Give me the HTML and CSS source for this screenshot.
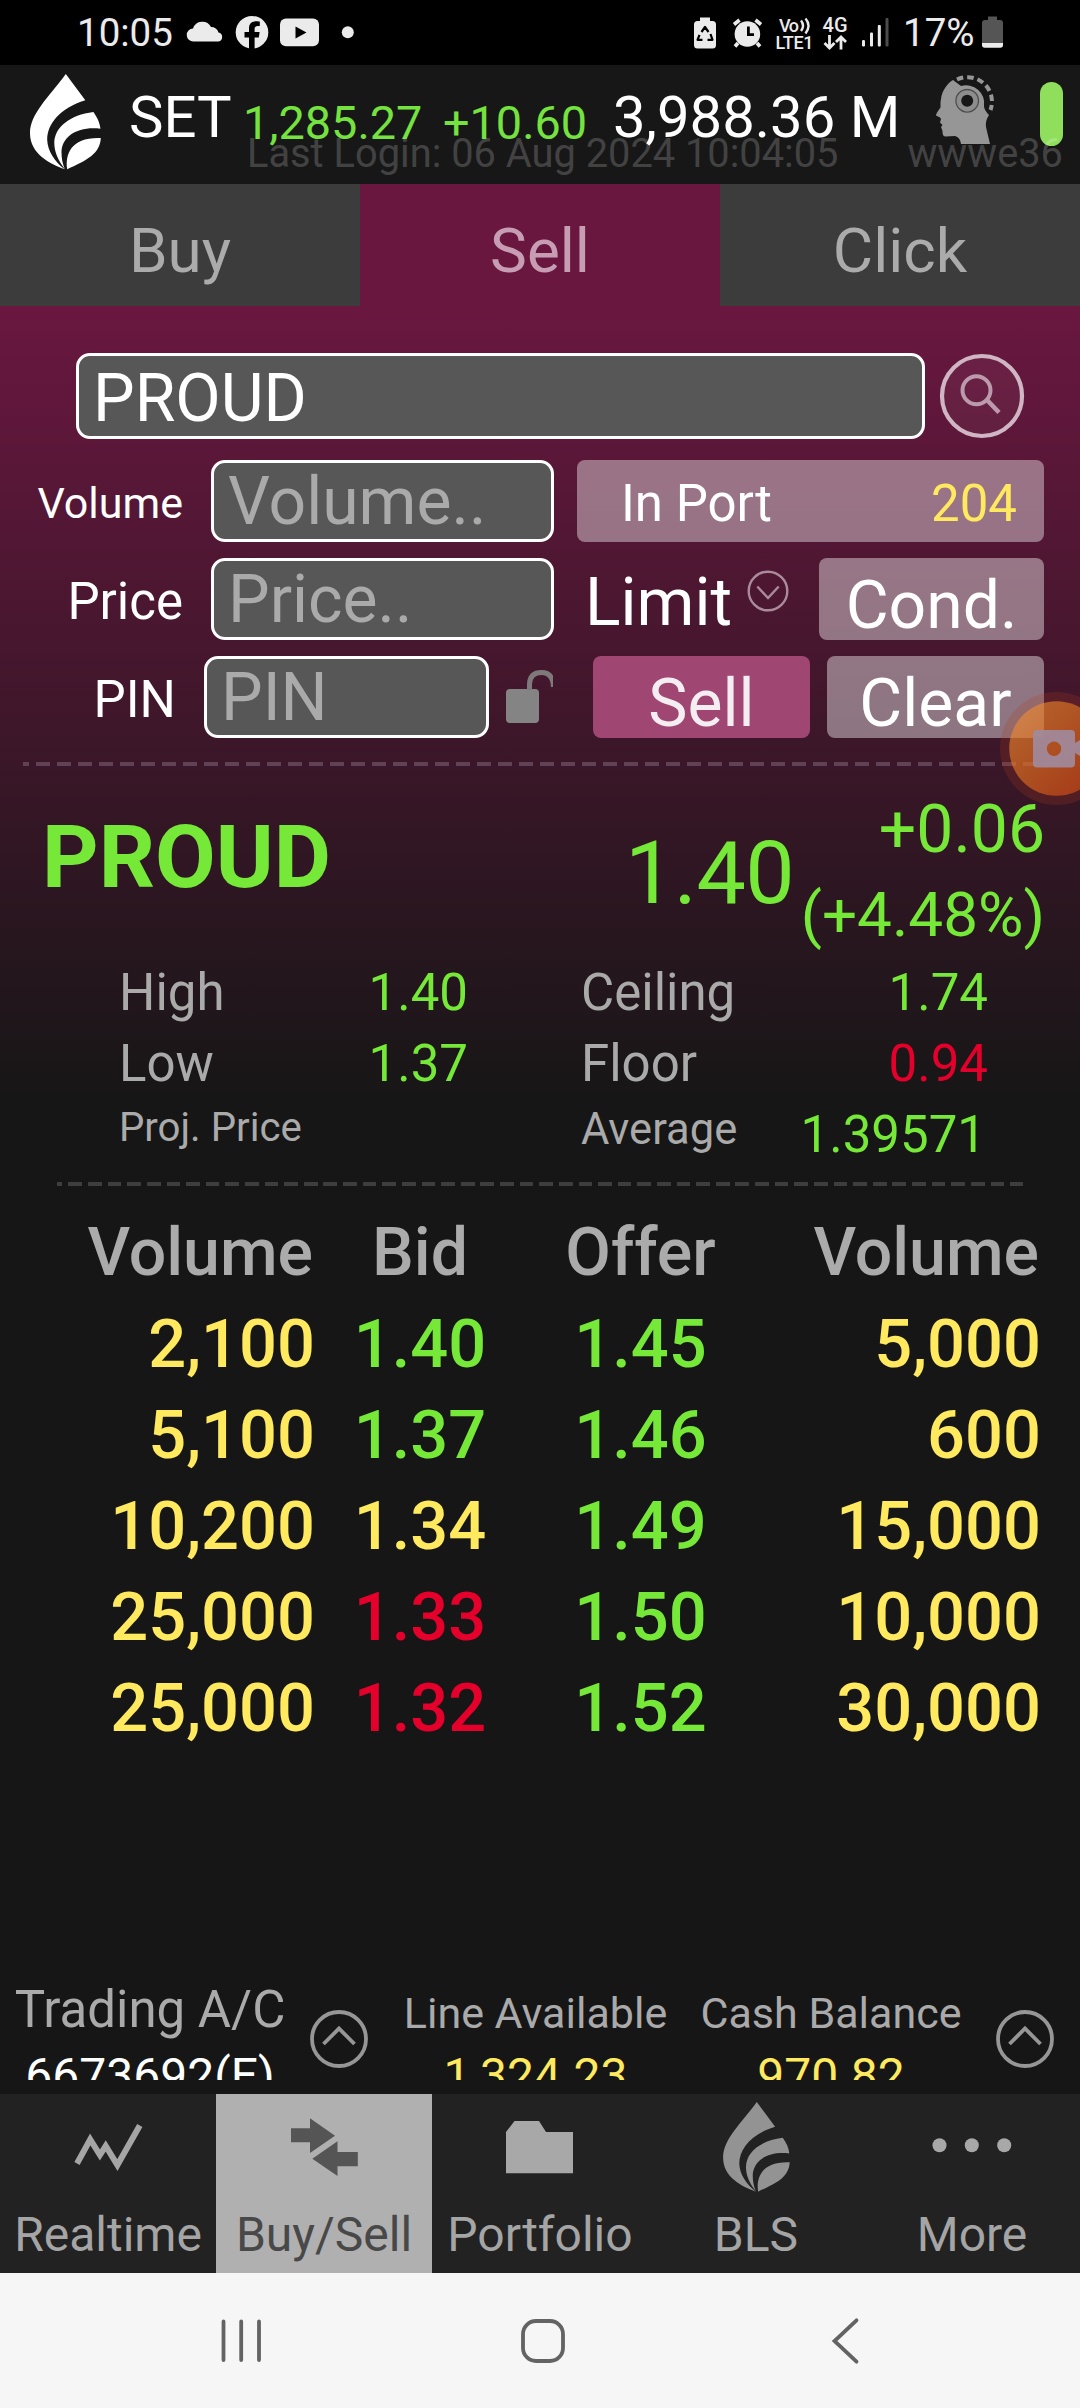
FILE: index.html
```html
<!DOCTYPE html>
<html lang="en">
<head>
<meta charset="utf-8">
<title>Buy/Sell - PROUD</title>
<link rel="stylesheet" href="styles.css">
</head>
<body>
<svg class="defs" width="0" height="0" aria-hidden="true">
  <symbol id="drop" viewBox="0 0 71 96">
    <path d="M35.8 0 L55.3 26.3 C30 34 17 50 17.2 66 C17.6 77 25 88 34.8 95.3 C20 90 0 80 0 59.3 C0 40 18 24 35.8 0Z"/>
    <path d="M63.4 38 C67 43 70 49 70.4 54.7 C48 52 32 62 31.5 78 C31.5 84 32.5 90 34.8 95 C28 86 24.3 78 24.3 69 C24.5 53 40 41 63.4 38Z"/>
    <path d="M70.8 64 C70 80 57 86 37.2 95.3 C35 80 41 63 70.8 64Z"/>
  </symbol>
</svg>
<div class="phone">
  <div class="status">
    <span class="clock">10:05</span>
    <svg class="status-left" viewBox="180 0 200 65" fill="#ebebeb">
      <path d="M193.5 41.5 a6.5 6.5 0 0 1 -.5 -13 a9.8 9.8 0 0 1 18 -1.5 a8 8 0 0 1 7.5 5.5 a4.6 4.6 0 0 1 0 9Z"/>
      <circle cx="252" cy="32.3" r="16.3"/>
      <path fill="#000" d="M249 49 V37.5 h-4.5 v-5.500 h4.500 v-3.500 c0-5 3-7.300 7.300-7.300 1.800 0 3.500.3 3.500.3 v4.400 h-2 c-2.300 0-3.200 1.400-3.200 3 v3.100 h5 l-.8 5.500 h-4.200 V49Z"/>
      <rect x="280" y="18.500" width="39" height="27.800" rx="6"/>
      <path fill="#000" d="M295.500 26.500 L306.500 32.400 L295.500 38.500Z"/>
      <circle cx="347.8" cy="32.200" r="6"/>
    </svg>
    <svg class="status-right" viewBox="690 0 210 65" fill="#ebebeb">
      <path d="M700 17.500 h10 v3.500 h2.500 a3.500 3.500 0 0 1 3.500 3.500 V45 a3.500 3.500 0 0 1 -3.500 3.500 H697.500 a3.500 3.500 0 0 1 -3.500 -3.500 V24.500 a3.500 3.500 0 0 1 3.500 -3.500 H700Z"/>
      <path d="M701.500 32 l3.500 -5 l3.500 5 M710.500 34 l2 5.800 h-5 M702.500 39.800 h-5 l2 -5" fill="none" stroke="#000" stroke-width="2.200" stroke-linejoin="round"/>
      <circle cx="747.4" cy="34" r="12.800"/>
      <path d="M734 24.500 l5.500 -4.500 M761 24.500 l-5.500 -4.500 M738 43 l-3 3.500 M757 43 l3 3.500" fill="none" stroke="#ebebeb" stroke-width="3.600"/>
      <path d="M748.400 26.500 V34.700 H754" fill="none" stroke="#000" stroke-width="2.800"/>
      <text x="779" y="31.500" class="tiny" textLength="20">Vo</text>
      <path d="M801 20.500 q4 5 0 10.500 M805.500 18.500 q6 7 0 15" fill="none" stroke="#ebebeb" stroke-width="2.400"/>
      <text x="775.5" y="49" class="tiny" textLength="38">LTE1</text>
      <text x="822.5" y="31.500" class="tiny big" textLength="25">4G</text>
      <path d="M829.500 35 V48 M824.500 43 l5 5 l5 -5 M841 49.500 V37 M836 42 l5 -5 l5 5" fill="none" stroke="#ebebeb" stroke-width="2.800"/>
      <rect x="862" y="40" width="3" height="6.500" rx="1.200"/>
      <rect x="870" y="32.500" width="3" height="14" rx="1"/>
      <rect x="877.800" y="25" width="3" height="21.500" rx="1"/>
      <rect x="885.500" y="18" width="3" height="28.500" rx="1" fill="#4c4c4c"/>
    </svg>
    <span class="percent">17%</span>
    <svg class="battery" viewBox="980 0 26 65">
      <path fill="#555" d="M988 16.500 h9 v3.500 h3 a3 3 0 0 1 3 3 V43 H982 V23 a3 3 0 0 1 3 -3 h3Z"/>
      <path fill="#ebebeb" d="M982 43 h21 v2 a2.700 2.700 0 0 1 -2.700 2.700 H984.700 a2.700 2.700 0 0 1 -2.700 -2.700Z"/>
    </svg>
  </div>

  <header class="market">
    <svg class="logo"><use href="#drop"/></svg>
    <span class="m-name">SET</span>
    <span class="m-num">1,285.27</span>
    <span class="m-num">+10.60</span>
    <span class="m-name">3,988.36 M</span>
    <svg class="head" viewBox="935 74 60 72">
      <path fill="#969696" d="M953 80 L961 86 A18 18 0 0 1 984 106 Q984 110 989 115 Q985 121 986 127 L990 144 H961 Q960 137 955 136 Q950 136 946 136.500 Q942 136.500 942.500 131 L941 127 L942.500 125 L940 122.500 L941 119 L940 117.500 L936 115.500 Q936 113.500 940.500 107.500 Q940 95 945 88 Q949 82 953 80Z"/>
      <circle cx="967.200" cy="100.800" r="8.500" fill="none" stroke="#8d8d8d" stroke-width="5"/>
      <circle cx="967.200" cy="100.800" r="11.300" fill="none" stroke="#4d4d4d" stroke-width="1.300"/>
      <circle cx="967.200" cy="100.800" r="6" fill="#171717"/>
      <path d="M957 79.500 A24.500 24.500 0 0 1 990.500 110" fill="none" stroke="#969696" stroke-width="4" stroke-dasharray="6.500 4"/>
    </svg>
    <span class="pill"></span>
    <div class="login"><span>Last Login: 06 Aug 2024 10:04:05</span><span>wwwe36</span></div>
  </header>

  <main class="trade">
    <nav class="tabs">
      <span class="tab">Buy</span><span class="tab on">Sell</span><span class="tab">Click</span>
    </nav>

    <section class="form">
      <div class="row search">
        <div class="input lit">PROUD</div>
        <svg class="find" viewBox="0 0 86 86" fill="none">
          <circle cx="43" cy="43" r="40" stroke="#d0b5c4" stroke-width="4.200" fill="#ffffff0a"/>
          <circle cx="37.500" cy="37.200" r="14" stroke="#bc9aad" stroke-width="4"/>
          <path d="M48 47 L60 59.500" stroke="#bc9aad" stroke-width="4.600"/>
        </svg>
      </div>
      <div class="row r-volume">
        <label class="small">Volume</label>
        <div class="input">Volume..</div>
        <div class="inport"><span>In Port</span><span class="yellow">204</span></div>
      </div>
      <div class="row r-price">
        <label>Price</label>
        <div class="input">Price..</div>
        <span class="limit">Limit</span>
        <svg class="down" viewBox="0 0 42 42" fill="none" stroke="#a98b9b" stroke-width="2.400">
          <circle cx="21" cy="21" r="19.300"/><path d="M10.300 16.500 L21 28 L31.700 16.500"/>
        </svg>
        <div class="btn">Cond.</div>
      </div>
      <div class="row r-pin">
        <label>PIN</label>
        <div class="input">PIN</div>
        <svg class="lock" viewBox="505 656 48 82">
          <rect x="506" y="689" width="33" height="34" rx="4" fill="#848484"/>
          <path d="M529.500 690 V684 Q530 672.500 541.500 672.500 Q553 672.500 553.500 687" fill="none" stroke="#7e7a7c" stroke-width="5"/>
        </svg>
        <div class="btn sell">Sell</div>
        <div class="btn clear">Clear</div>
      </div>
    </section>

    <div class="dash dash-a"></div>

    <section class="quote">
      <strong class="symbol">PROUD</strong>
      <span class="last">1.40</span>
      <div class="change"><span>+0.06</span><span class="pct">(+4.48%)</span></div>
    </section>

    <section class="stats">
      <span>High</span><span class="val green">1.40</span><span class="c2">Ceiling</span><span class="val green">1.74</span>
      <span>Low</span><span class="val green">1.37</span><span class="c2">Floor</span><span class="val red">0.94</span>
      <span class="proj">Proj. Price</span><span></span><span class="c2 avg">Average</span><span class="val green last-val">1.39571</span>
    </section>

    <div class="dash dash-b"></div>

    <section class="book">
      <span class="v h">Volume</span><span class="p h">Bid</span><span class="p h">Offer</span><span class="v h">Volume</span>
      <span class="v">2,100</span><span class="p green">1.40</span><span class="p green">1.45</span><span class="v">5,000</span>
      <span class="v">5,100</span><span class="p green">1.37</span><span class="p green">1.46</span><span class="v">600</span>
      <span class="v">10,200</span><span class="p yellow">1.34</span><span class="p green">1.49</span><span class="v">15,000</span>
      <span class="v">25,000</span><span class="p red">1.33</span><span class="p green">1.50</span><span class="v">10,000</span>
      <span class="v">25,000</span><span class="p red">1.32</span><span class="p green">1.52</span><span class="v">30,000</span>
    </section>

    <section class="account">
      <div class="acc"><span class="t big">Trading A/C</span><span class="n">6673692(E)</span></div>
      <svg class="up" viewBox="0 0 60 60"><circle cx="30" cy="30" r="27"/><path d="M14.500 35 L30 19.500 L45.500 35"/></svg>
      <div class="acc"><span class="t">Line Available</span><span class="n yellow">1,324.23</span></div>
      <div class="acc"><span class="t">Cash Balance</span><span class="n yellow">970.82</span></div>
      <svg class="up" viewBox="0 0 60 60"><circle cx="30" cy="30" r="27"/><path d="M14.500 35 L30 19.500 L45.500 35"/></svg>
    </section>
    <svg class="record" viewBox="0 0 80 114">
      <defs>
        <linearGradient id="glow" x1="0" y1="0" x2="1" y2="1"><stop offset="0" stop-color="#f69a35"/><stop offset=".5" stop-color="#e8701e"/><stop offset="1" stop-color="#dc4410"/></linearGradient>
      </defs>
      <circle cx="56.500" cy="56.500" r="56.500" fill="#b03a1c" fill-opacity=".22"/>
      <circle cx="56.500" cy="56.500" r="47.300" fill="url(#glow)" fill-opacity=".6"/>
      <path fill="#9f8a9c" fill-opacity=".92" fill-rule="evenodd" d="M37 38 h34 a4 4 0 0 1 4 4 v9 l5 -3 v16 l-5 -3 v10.500 a4 4 0 0 1 -4 4 H37 a4 4 0 0 1 -4 -4 V42 a4 4 0 0 1 4 -4Z M54 49.500 a7.200 7.200 0 1 0 .01 0Z"/>
    </svg>
  </main>

  <nav class="bottom">
    <div class="item">
      <svg viewBox="0 2094 216 106" fill="none" stroke="#a5a5a5" stroke-width="6"><path d="M77 2163.500 L90.200 2139.500 L99.900 2155 L105.700 2146 L117.400 2165 L139.800 2125.500"/></svg>
      <span>Realtime</span>
    </div>
    <div class="item on">
      <svg viewBox="216 2094 216 106" fill="#555"><path d="M291 2128.300 H310 V2118.300 L335 2135.700 L310 2153 V2142.300 H291Z M357.800 2152 V2166.300 H337.500 V2176 L312.300 2158.700 L337.500 2141.300 V2152Z"/></svg>
      <span>Buy/Sell</span>
    </div>
    <div class="item">
      <svg viewBox="432 2094 216 106" fill="#a8a8a8"><path d="M506 2132 L514.500 2121 H539 L546 2132 H573 V2173.300 H506Z"/></svg>
      <span>Portfolio</span>
    </div>
    <div class="item">
      <svg viewBox="648 2094 216 106" fill="#939393"><use href="#drop" x="723" y="2102" width="67" height="90.300"/></svg>
      <span>BLS</span>
    </div>
    <div class="item">
      <svg viewBox="864 2094 216 106" fill="#a8a8a8"><circle cx="939.500" cy="2145.300" r="7"/><circle cx="971.800" cy="2145.300" r="7"/><circle cx="1004.200" cy="2145.300" r="7"/></svg>
      <span>More</span>
    </div>
  </nav>

  <div class="system">
    <svg viewBox="0 0 44 44"><path d="M4.500 2.500 V41 M22.200 2.500 V41 M40 2.500 V41"/></svg>
    <svg viewBox="0 0 44 44"><rect x="2" y="2" width="40" height="40" rx="13"/></svg>
    <svg viewBox="0 0 44 48"><path d="M33.500 3.300 L11.500 24 L33.500 44.700" stroke-linejoin="miter"/></svg>
  </div>
</div>
</body>
</html>
```
FILE: styles.css
```css
* { box-sizing: border-box; }
body { margin: 0; background: #161616; }
.defs { display: none; }
.phone {
  width: 1080px; height: 2408px; overflow: hidden;
  display: flex; flex-direction: column;
  font-family: Roboto, "Liberation Sans", sans-serif;
  line-height: 1; white-space: nowrap; color: #aaa; background: #161616;
}
svg { display: block; }
.green { color: #75e838; }
.red { color: #e4002b; }
.yellow { color: #ffe95e; }

/* status bar */
.status {
  height: 65px; flex: none; background: #000; color: #ebebeb;
  display: grid; grid-template-columns: 103px 510px 213px 77px 100px;
  padding-left: 77px; align-items: center; font-size: 38.5px;
}
.clock, .percent { padding-top: 1px; }
.status-left { width: 200px; height: 65px; }
.status-right { width: 210px; height: 65px; }
.battery { width: 26px; height: 65px; }
.tiny { font: 500 18px Roboto, sans-serif; }
.tiny.big { font-size: 20px; }

/* market header */
.market {
  height: 119px; flex: none; position: relative; background: #171717;
  display: grid; grid-template-columns: 99px 114px 200px 170px 322px 105px 23px;
  padding-left: 30px; align-items: start;
}
.logo { width: 71px; height: 96px; margin-top: 9px; fill: #fff; }
.m-name { font-size: 58px; color: #fff; margin-top: 23px; }
.m-num { font-size: 46.8px; color: #75e240; margin-top: 35px; }
.head { width: 60px; height: 72px; margin-top: 9px; }
.pill { height: 64px; margin-top: 17px; border-radius: 12px; background: #8fdf5d; }
.login {
  position: absolute; left: 247px; right: 17px; top: 69px;
  display: flex; justify-content: space-between;
  font-size: 39.8px; color: rgba(255, 255, 255, .2);
}

/* trade panel */
.trade {
  flex: 1; position: relative; display: flex; flex-direction: column;
  background: linear-gradient(#6a1740 122px, #161616 922px);
}
.tabs { display: grid; grid-template-columns: repeat(3, 1fr); height: 122px; flex: none; }
.tab {
  display: flex; align-items: center; justify-content: center;
  padding-top: 11px; font-size: 62px; background: #3c3c3c; color: #ababab;
}
.tab.on { background: #6a1740; color: #c79db3; }

.form { display: flex; flex-direction: column; gap: 16px; padding-top: 47px; }
.row { display: grid; height: 82px; align-items: center; font-size: 51px; color: #fff; }
.row.search { height: 85px; margin-bottom: 6px; padding-left: 76px; grid-template-columns: 849px 1fr; }
.r-volume { grid-template-columns: 183px 371px 490px; }
.r-price { grid-template-columns: 183px 371px 193px 72px 225px; }
.r-pin { grid-template-columns: 176px 313px 64px 257px 234px; }
.row label { text-align: right; padding-top: 5px; }
.row label.small { font-size: 43px; }
.input {
  height: 100%; display: flex; align-items: center; padding: 1px 0 0 14px;
  border: 3px solid #fff; border-radius: 14px; background: #575757;
  color: #aaa; font-size: 66px;
}
.input.lit { color: #fff; padding: 5px 0 0 14px; }
.row:not(.search) .input { margin-left: 28px; }
.find { width: 86px; height: 86px; margin-left: 14px; }
.inport {
  height: 100%; margin-left: 23px; padding: 5px 27px 0 44px;
  display: flex; justify-content: space-between; align-items: center;
  border-radius: 8px; background: rgba(255, 255, 255, .4);
}
.limit { font-size: 66px; padding: 8px 0 0 31px; }
.down { width: 42px; height: 42px; margin-top: -16px; }
.btn {
  height: 100%; display: flex; align-items: center; justify-content: center;
  padding-top: 13px; font-size: 66px; border-radius: 8px;
  background: rgba(255, 255, 255, .41);
}
.btn.sell { margin-left: 40px; background: #9f4673; color: #f4eef2; }
.btn.clear { margin-left: 17px; }
.lock { width: 48px; height: 82px; margin-left: 16px; }

.dash { height: 4px; flex: none; }
.dash-a {
  margin: 24px 24px 0 23px;
  background: repeating-linear-gradient(90deg, #614154 0 6px, transparent 6px 13px, #614154 13px 21px);
}
.dash-b {
  margin: 12px 57px 0;
  background: repeating-linear-gradient(90deg, #3e3e3e 0 5.5px, transparent 5.5px 11.4px, #3e3e3e 11.4px 19.62px);
}

.quote {
  height: 191px; flex: none; align-items: start; color: #75e838;
  display: grid; grid-template-columns: 583px 1fr 250px; padding: 0 35px 0 42px;
}
.symbol { font-size: 88px; margin-top: 47px; }
.last { font-size: 88px; letter-spacing: -.6px; margin-top: 63px; }
.change { display: flex; flex-direction: column; align-items: flex-end; font-size: 66px; padding-top: 31px; gap: 21px; }
.pct { font-size: 62px; }

.stats {
  display: grid; grid-template: repeat(3, 71px) / 240px 109px 233px 287px;
  padding-left: 119px; align-items: center; font-size: 51px;
}
.stats .val { text-align: right; }
.stats .last-val { padding-right: 2px; }
.stats .c2 { padding-left: 113px; }
.stats .proj { font-size: 40.2px; padding-bottom: 13px; }
.stats .avg { font-size: 43.5px; padding-bottom: 9px; }

.book {
  display: grid; grid-template-columns: 315px 210px 231px 285px;
  grid-auto-rows: 91px; align-items: center; margin-top: 21px;
  font-size: 66.8px; font-weight: 500;
}
.book span { padding-top: 1px; }
.book .v { text-align: right; color: #ffe95e; }
.book .p { text-align: center; }
.book .h { font-size: 66.2px; }
.book .h.v, .book .h.p { color: #ababab; }
.book .h.v { padding-right: 2px; }

.account {
  margin-top: auto; margin-bottom: 14px; height: 100px; overflow: hidden; flex: none;
  display: grid; grid-template-columns: 300px 93px 285px 306px 96px; align-items: start;
}
.acc { display: flex; flex-direction: column; align-items: center; }
.t { height: 60px; line-height: 60px; font-size: 43px; padding-top: 3px; }
.t.big { font-size: 51px; padding-top: 0; }
.n { margin-top: 8px; line-height: 56px; font-size: 48px; }
.acc:first-child .n { color: #fff; }
.up { width: 60px; height: 60px; margin: 29px 0 0 9px; fill: none; stroke: #969696; stroke-width: 3.8; }
.up:last-child { margin-left: 11px; }

/* screen recorder bubble */
.record { position: absolute; right: 0; top: 508px; width: 80px; height: 114px; }

/* bottom navigation */
.bottom { height: 179px; flex: none; display: grid; grid-template-columns: repeat(5, 216px); background: #222; }
.item { display: flex; flex-direction: column; align-items: center; font-size: 48px; line-height: 69px; color: #a5a5a5; }
.item svg { width: 216px; height: 106px; }
.item.on { background: #b0b0b0; color: #484848; }

.system { height: 135px; flex: none; display: flex; background: #f6f6f6; align-items: center; padding-left: 219px; gap: 258px; }
.system svg { width: 44px; height: 44px; fill: none; stroke: #636363; stroke-width: 3.8; stroke-linecap: round; }
.system svg:last-child { height: 48px; }
```
